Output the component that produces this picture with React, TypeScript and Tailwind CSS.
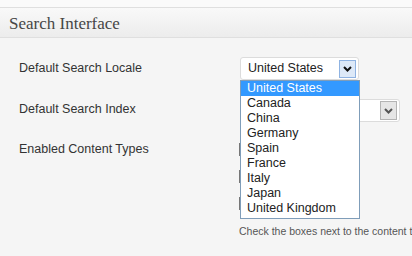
import React from 'react';

const locales = [
  'United States',
  'Canada',
  'China',
  'Germany',
  'Spain',
  'France',
  'Italy',
  'Japan',
  'United Kingdom',
];

const Chevron = ({ color }: { color: string }) => (
  <svg width="9" height="6" viewBox="0 0 9 6">
    <path d="M1 1 L4.5 4.5 L8 1" fill="none" stroke={color} strokeWidth="2" />
  </svg>
);

const App: React.FC = () => {
  return (
    <div
      className="w-[412px] h-[256px] overflow-hidden bg-[#f5f5f5]"
      style={{ fontFamily: '"Liberation Sans", Arial, sans-serif' }}
    >
      <div className="h-[7px] bg-[#fafafa]" />
      {/* section header */}
      <div className="h-[31px] border-t border-b border-[#dfdfdf] bg-gradient-to-b from-[#f9f9f9] to-[#ececec] flex items-center pl-[9px]">
        <h3
          className="text-[17px] text-[#464646] leading-none pt-[1px]"
          style={{ fontFamily: '"Liberation Serif", "DejaVu Serif", serif' }}
        >
          Search Interface
        </h3>
      </div>

      <div className="pt-[19px] pl-[19px] text-[12.5px] text-[#333]">
        {/* locale row */}
        <div className="grid grid-cols-[221px_1fr] items-center h-[23px]">
          <label className="-mt-[1px]">Default Search Locale</label>
          <div className="relative w-[119px]">
            <div className="h-[23px] flex items-center justify-between pl-[7px] pr-[2px] bg-white border border-[#dcdcdc] rounded-[3px]">
              <span className="text-[#222]">United States</span>
              <span className="w-[17px] h-[18px] flex items-center justify-center bg-[#dde9f8] border border-[#8fb3e2]">
                <Chevron color="#111" />
              </span>
            </div>
            {/* open option list */}
            <ul className="absolute z-10 left-0 top-[23px] w-[120px] bg-white border border-[#7f9db9] leading-[15px] text-[#222] pb-[2px]">
              {locales.map((name, i) => (
                <li
                  key={name}
                  className={
                    i === 0
                      ? 'h-[15px] pl-[6px] bg-[#3399ff] text-white'
                      : 'h-[15px] pl-[6px]'
                  }
                >
                  {name}
                </li>
              ))}
            </ul>
          </div>
        </div>

        {/* index row */}
        <div className="grid grid-cols-[221px_1fr] items-center h-[23px] mt-[19px]">
          <label className="-mt-[2px]">Default Search Index</label>
          <div className="w-[160px] h-[23px] flex items-center justify-end pr-[2px] bg-white border border-[#dcdcdc] rounded-[3px]">
            <span className="w-[17px] h-[19px] flex items-center justify-center bg-[#e6e6e6] border border-[#b4b4b4]">
              <Chevron color="#555" />
            </span>
          </div>
        </div>

        {/* content types row */}
        <div className="grid grid-cols-[220px_1fr] mt-[20px]">
          <label className="leading-[15px]">Enabled Content Types</label>
          <div className="flex flex-col">
            <div className="flex flex-col gap-[14px] pt-[1px]">
              <span className="w-[13px] h-[13px] border border-[#777] bg-white" />
              <span className="w-[13px] h-[13px] border border-[#777] bg-white" />
              <span className="w-[13px] h-[13px] border border-[#777] bg-white" />
            </div>
            <p className="mt-[14px] text-[10.5px] text-[#555] whitespace-nowrap">
              Check the boxes next to the content types you want to enable
            </p>
          </div>
        </div>
      </div>
    </div>
  );
};

export default App;
